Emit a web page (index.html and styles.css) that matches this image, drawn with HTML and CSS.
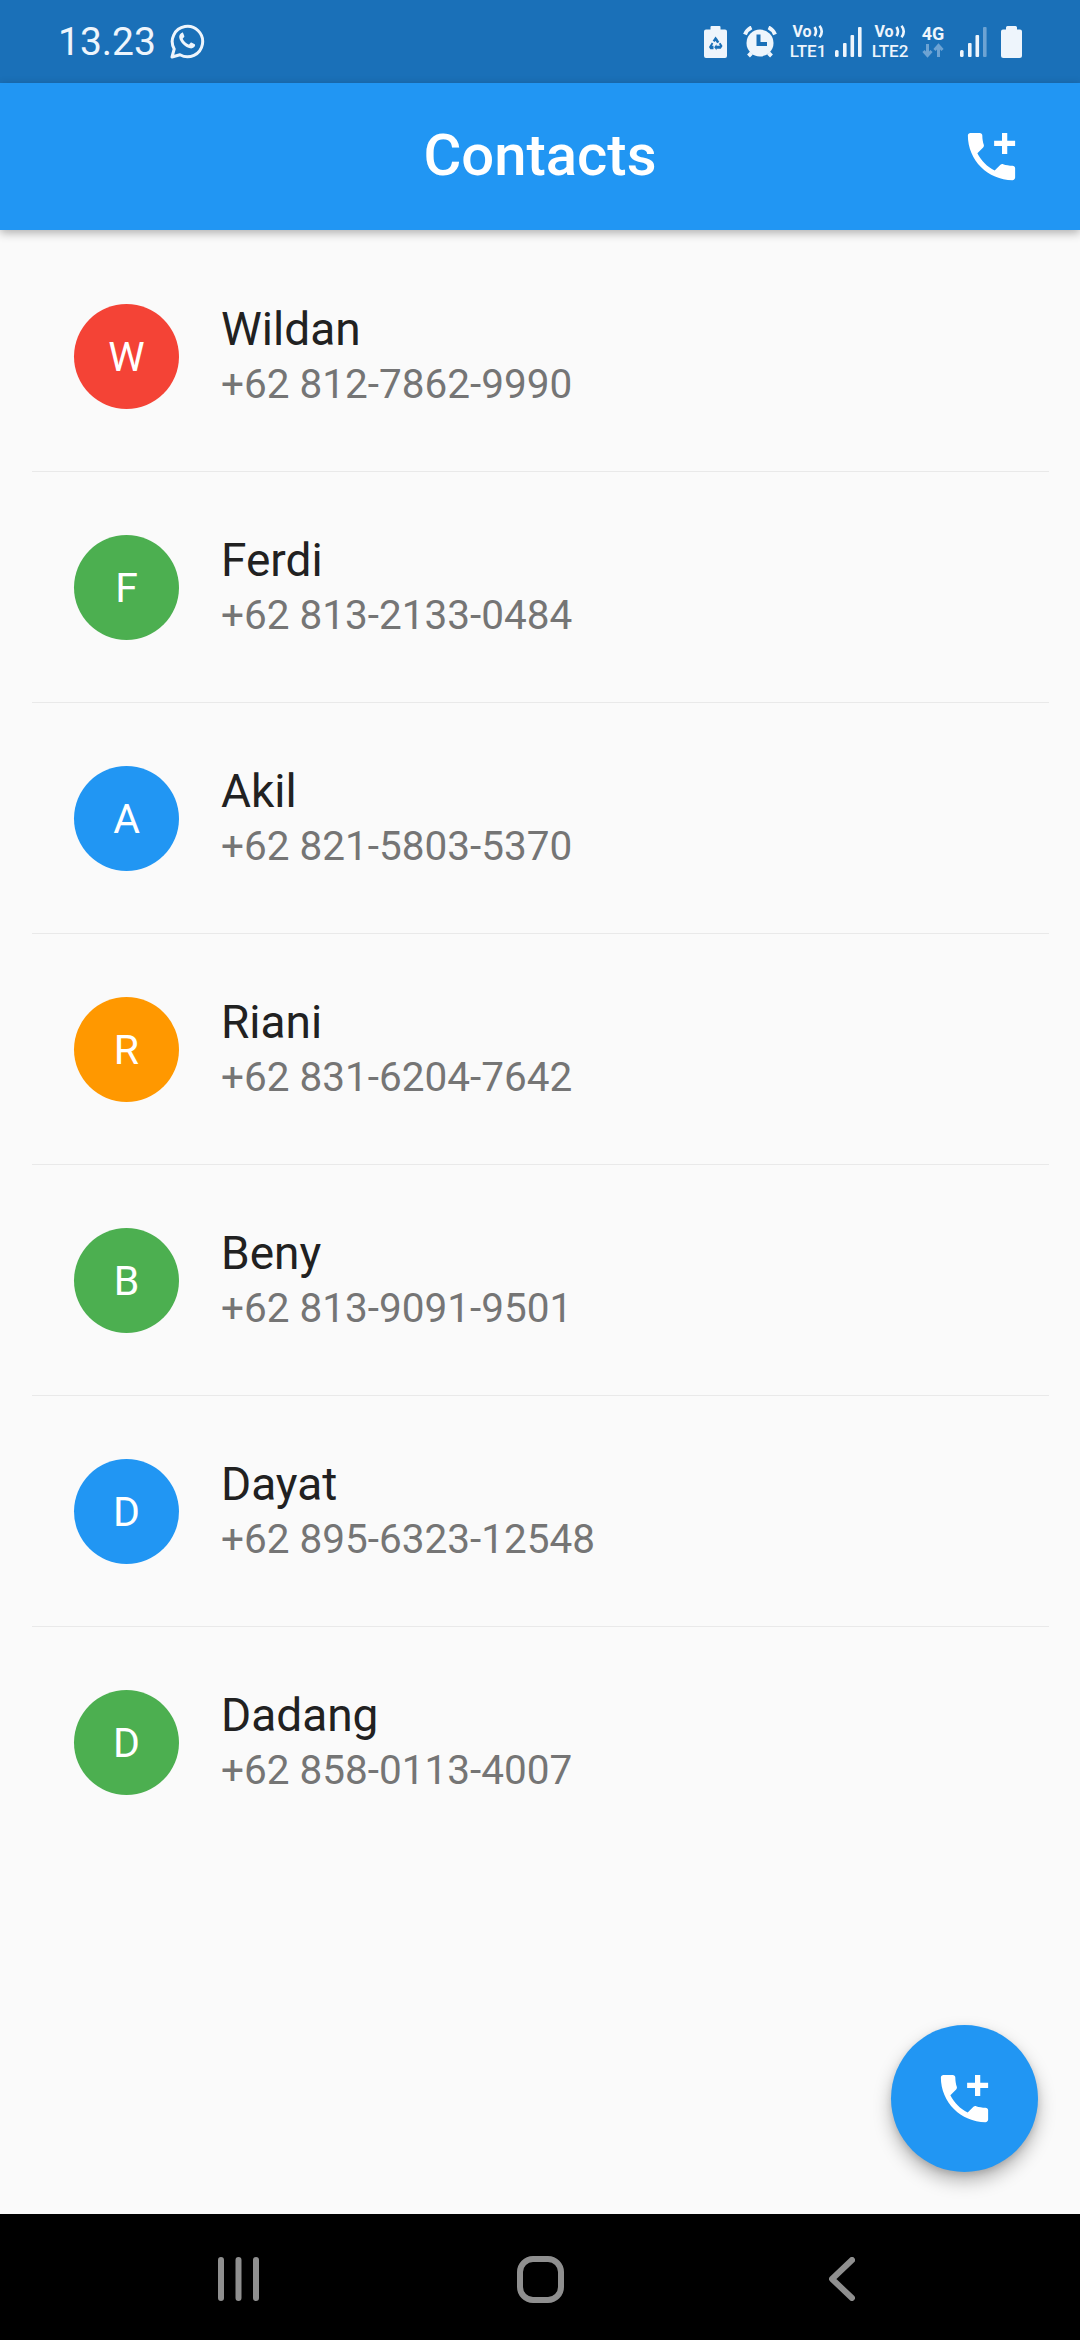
FILE: index.html
```html
<!DOCTYPE html>
<html lang="en">
<head>
<meta charset="utf-8">
<title>Contacts</title>
<link rel="stylesheet" href="styles.css">
</head>
<body>
<div class="app">
  <div class="status">
    <div class="status-left">
      <span class="clock">13.23</span>
      <svg class="wa" viewBox="0 0 35 35"><path class="wa-ring" d="M2 33l2.2-8A15.2 15.2 0 1 1 10 30.8z"/><path class="wa-phone" d="M12.500 8.800c-.5 0-1.500.3-2.200 1.200-.8 1-1.300 2.300-1 3.800.4 2.200 1.800 4.500 3.800 6.500 2.200 2.200 4.700 3.600 7 4 1.600.3 2.900-.2 3.800-1 .8-.8 1.200-1.800 1.200-2.400 0-.3-.1-.5-.4-.7l-3.300-1.700c-.3-.1-.6-.1-.8.2l-1.300 1.600c-.2.2-.4.3-.7.2-1.200-.5-2.400-1.200-3.400-2.200-1-1-1.800-2.100-2.400-3.300-.1-.3 0-.5.2-.7l1.200-1.400c.2-.2.2-.5.1-.8l-1.300-3.300c-.2-.4-.4-.5-.7-.5z"/></svg>
    </div>
    <div class="status-right">
      <svg class="s-batsave" viewBox="0 0 23 32"><path class="fill" fill-rule="evenodd" d="M6.500 1a1 1 0 0 1 1-1h8a1 1 0 0 1 1 1v2.500h4.500a2 2 0 0 1 2 2V30a2 2 0 0 1-2 2H2a2 2 0 0 1-2-2V5.500a2 2 0 0 1 2-2h4.500zM11.500 10.500l-2.800 4.300 2 1.200 .8-1.300 1.600 2.600 2.200-1.300-2-3.300zM7.800 16.500l-2.800 4.500 1.300 2.300h3.200v-3.500H8l1.300-2.200zM16.500 16.800l-1.700 1 1.200 2h-3.500v-1.500l-2.300 3 2.300 3v-1.500h4.300l1.700-2.900z"/></svg>
      <svg class="s-alarm" viewBox="0 0 34 32"><circle class="fill" cx="17" cy="17" r="13.500"/><path class="bg-stroke" d="M15.500 8.500v9.500h8.500"/><path class="white-stroke" d="M2 8.500Q4 3.500 8.500 1.500M32 8.500Q30 3.500 25.500 1.500M5.500 30l3-3M28.500 30l-3-3"/></svg>
      <div class="volte v1">
        <div class="vo"><span>Vo</span><svg class="waves" viewBox="0 0 11 13"><path class="wave-stroke" d="M1.500 2q3 4.500 0 9M6.500 .8q4.500 5.700 0 11.400"/></svg></div>
        <div class="lte">LTE1</div>
      </div>
      <svg class="s-signal" viewBox="0 0 27 30"><rect class="fill" x="0" y="23" width="3.600" height="7" rx="1.500"/><rect class="fill" x="8" y="16" width="3.600" height="14" rx="1"/><rect class="fill" x="15.500" y="8" width="3.600" height="22" rx="1"/><rect class="fill" x="23" y="0" width="3.600" height="30" rx="1"/></svg>
      <div class="volte v2">
        <div class="vo"><span>Vo</span><svg class="waves" viewBox="0 0 11 13"><path class="wave-stroke" d="M1.500 2q3 4.500 0 9M6.500 .8q4.500 5.700 0 11.400"/></svg></div>
        <div class="lte">LTE2</div>
      </div>
      <div class="net">
        <div class="net-label">4G</div>
        <svg class="net-arrows" viewBox="0 0 24 15"><path class="arrow" d="M6.500 1v11M2.500 8l4 4.500 4-4.500"/><path class="arrow" d="M17.500 14V2.500M13.500 7l4-4.500 4 4.500"/></svg>
      </div>
      <svg class="s-signal" viewBox="0 0 27 30"><rect class="fill" x="0" y="23" width="3.600" height="7" rx="1.500"/><rect class="fill" x="8" y="16" width="3.600" height="14" rx="1"/><rect class="fill" x="15.500" y="8" width="3.600" height="22" rx="1"/><rect class="dim" x="23" y="0" width="3.600" height="30" rx="1"/></svg>
      <svg class="s-battery" viewBox="0 0 21 32"><path class="fill" d="M5 1.500A1.500 1.500 0 0 1 6.500 0h8A1.500 1.500 0 0 1 16 1.500V3.500h3a2 2 0 0 1 2 2V29.500a2.500 2.500 0 0 1-2.500 2.500h-16A2.500 2.500 0 0 1 0 29.500V5.500a2 2 0 0 1 2-2h3z"/></svg>
    </div>
  </div>

  <header class="appbar">
    <h1 class="title">Contacts</h1>
    <svg class="call-add appbar-action" viewBox="0 0 24 24"><path d="M20 15.500c-1.250 0-2.450-.2-3.570-.57-.35-.11-.74-.03-1.020.24l-2.200 2.200c-2.830-1.440-5.150-3.750-6.590-6.590l2.200-2.210c.28-.26.36-.65.25-1C8.700 6.450 8.500 5.250 8.500 4c0-.55-.45-1-1-1H4c-.55 0-1 .45-1 1 0 9.390 7.610 17 17 17 .55 0 1-.45 1-1v-3.500c0-.55-.45-1-1-1zM21 6h-3V3h-2v3h-3v2h3v3h2V8h3z"/></svg>
  </header>

  <main class="list">
    <div class="row">
      <div class="avatar red">W</div>
      <div class="info"><div class="name">Wildan</div><div class="phone">+62 812-7862-9990</div></div>
    </div>
    <div class="row">
      <div class="avatar green">F</div>
      <div class="info"><div class="name">Ferdi</div><div class="phone">+62 813-2133-0484</div></div>
    </div>
    <div class="row">
      <div class="avatar blue">A</div>
      <div class="info"><div class="name">Akil</div><div class="phone">+62 821-5803-5370</div></div>
    </div>
    <div class="row">
      <div class="avatar orange">R</div>
      <div class="info"><div class="name">Riani</div><div class="phone">+62 831-6204-7642</div></div>
    </div>
    <div class="row">
      <div class="avatar green">B</div>
      <div class="info"><div class="name">Beny</div><div class="phone">+62 813-9091-9501</div></div>
    </div>
    <div class="row">
      <div class="avatar blue">D</div>
      <div class="info"><div class="name">Dayat</div><div class="phone">+62 895-6323-12548</div></div>
    </div>
    <div class="row last">
      <div class="avatar green">D</div>
      <div class="info"><div class="name">Dadang</div><div class="phone">+62 858-0113-4007</div></div>
    </div>
    <button class="fab" type="button" aria-label="Add contact">
      <svg class="call-add" viewBox="0 0 24 24"><path d="M20 15.500c-1.250 0-2.450-.2-3.570-.57-.35-.11-.74-.03-1.020.24l-2.200 2.200c-2.830-1.440-5.150-3.750-6.590-6.590l2.200-2.210c.28-.26.36-.65.25-1C8.700 6.450 8.500 5.250 8.500 4c0-.55-.45-1-1-1H4c-.55 0-1 .45-1 1 0 9.390 7.610 17 17 17 .55 0 1-.45 1-1v-3.500c0-.55-.45-1-1-1zM21 6h-3V3h-2v3h-3v2h3v3h2V8h3z"/></svg>
    </button>
  </main>

  <nav class="navbar">
    <div class="nav-item"><svg class="nav-recents" viewBox="0 0 41 44"><path class="nav-stroke" d="M3 3v38M20.500 3v38M38 3v38"/></svg></div>
    <div class="nav-item"><svg class="nav-home" viewBox="0 0 47 47"><rect class="nav-stroke" x="3" y="3" width="41" height="41" rx="13"/></svg></div>
    <div class="nav-item"><svg class="nav-back" viewBox="0 0 26 44"><path class="nav-stroke" d="M23 3L3 22l20 19"/></svg></div>
  </nav>
</div>
</body>
</html>
```
FILE: styles.css
```css
* { box-sizing: border-box; }
html, body { margin: 0; padding: 0; }
body { font-family: Roboto, "Liberation Sans", sans-serif; background: #fafafa; }

.app { width: 1080px; height: 2340px; display: flex; flex-direction: column; overflow: hidden; }

/* status bar */
.status { height: 83px; flex: none; background: #1a70b8; display: flex; justify-content: space-between; align-items: center; padding: 0 58px 0 58px; color: #eef5fc; }
.status-left { display: flex; align-items: center; gap: 14px; }
.clock { font-size: 39px; line-height: 44px; }
.wa { width: 35px; height: 35px; display: block; }
.wa-ring { fill: none; stroke: #eef5fc; stroke-width: 3; stroke-linejoin: round; }
.wa-phone { fill: #eef5fc; }
.status-right { display: flex; align-items: center; }
.fill { fill: #eef5fc; }
.dim { fill: #6da3d3; }
.bg-stroke { fill: none; stroke: #1a70b8; stroke-width: 4; }
.white-stroke { fill: none; stroke: #eef5fc; stroke-width: 4; }
.s-batsave { width: 23px; height: 32px; display: block; }
.s-alarm { width: 34px; height: 32px; display: block; margin-left: 16px; }
.volte { margin-left: 11px; width: 40px; height: 32px; display: flex; flex-direction: column; align-items: center; font-weight: 500; }
.vo { display: flex; align-items: center; flex: none; font-size: 16px; height: 12px; font-weight: 700; }
.waves { width: 11px; height: 13px; margin-left: 1px; display: block; }
.wave-stroke { fill: none; stroke: #eef5fc; stroke-width: 2.600; }
.lte { font-size: 17px; line-height: 27px; flex: none; }
.s-signal { width: 27px; height: 30px; display: block; }
.v1 + .s-signal { margin-left: 7px; }
.v2 { margin-left: 8px; }
.net { margin-left: 11px; width: 24px; display: flex; flex-direction: column; align-items: center; font-weight: 700; }
.net-label { font-size: 18px; line-height: 17px; }
.net-arrows { width: 24px; height: 15px; display: block; margin-top: 1px; }
.arrow { fill: none; stroke: #6da3d3; stroke-width: 3; }
.net + .s-signal { margin-left: 15px; }
.s-battery { width: 21px; height: 32px; display: block; margin-left: 14px; }

/* app bar */
.appbar { position: relative; z-index: 2; height: 147px; flex: none; background: #2196f3; display: flex; align-items: center; justify-content: center; box-shadow: 0 3px 9px rgba(0,0,0,.3); padding-bottom: 3px; }
.title { margin: 0; font-size: 58px; font-weight: 500; color: #fff; }
.call-add { width: 63px; height: 63px; display: block; fill: #fff; }
.appbar-action { position: absolute; right: 57px; top: 42px; }

/* list */
.list { flex: 1; position: relative; padding-top: 11px; }
.row { margin: 0 31px 0 32px; height: 231px; padding: 63px 0 0 42px; display: flex; align-items: flex-start; border-bottom: 1px solid #e9e9e9; }
.row.last { border-bottom: 0; }
.avatar { width: 105px; height: 105px; border-radius: 50%; flex: none; display: flex; align-items: center; justify-content: center; color: #fff; font-size: 41px; }
.red { background: #f44336; }
.green { background: #4caf50; }
.blue { background: #2196f3; }
.orange { background: #ff9800; }
.info { margin-left: 42px; }
.name { font-size: 46px; line-height: 53px; color: #212121; margin-top: -1px; }
.phone { font-size: 40.500px; line-height: 46px; color: #757575; margin-top: 5px; }

.fab { position: absolute; right: 42px; bottom: 42px; width: 147px; height: 147px; border: 0; padding: 0; border-radius: 50%; background: #2196f3; display: flex; align-items: center; justify-content: center; box-shadow: 0 9px 18px rgba(0,0,0,.28), 0 3px 6px rgba(0,0,0,.12); }

/* navigation bar */
.navbar { height: 126px; flex: none; background: #000; display: flex; justify-content: center; align-items: center; padding-top: 4px; }
.nav-item { width: 302px; display: flex; justify-content: center; }
.nav-stroke { fill: none; stroke: #8f8f8f; stroke-width: 6; stroke-linecap: round; stroke-linejoin: round; }
.nav-recents { width: 41px; height: 44px; display: block; }
.nav-home { width: 47px; height: 47px; display: block; }
.nav-back { width: 26px; height: 44px; display: block; }
```
